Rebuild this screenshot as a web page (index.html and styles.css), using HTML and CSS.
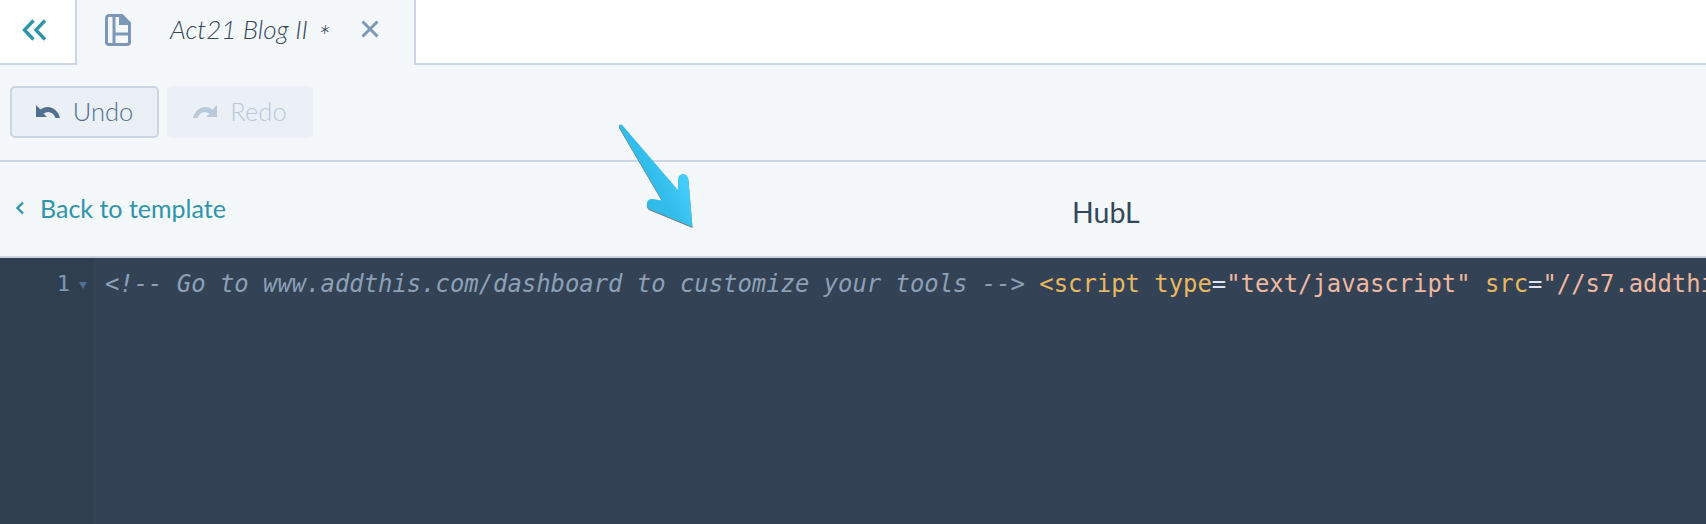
FILE: index.html
```html
<!DOCTYPE html>
<html lang="en">
<head>
<meta charset="utf-8">
<title>Act21 Blog II</title>
<link rel="stylesheet" href="styles.css">
</head>
<body>
<div class="tabbar">
  <div class="collapse">
    <svg class="icon-collapse" viewBox="0 0 26 22" width="26" height="22"><path d="M11.500 1.500 2.500 11l9 9.500M23 1.500 14 11l9 9.500" fill="none" stroke="#2e95ab" stroke-width="3.400"/></svg>
  </div>
  <div class="tab">
    <svg class="icon-file" viewBox="0 0 26 32" width="26" height="32">
      <path d="M4 1.500H17L24.500 9V28a2.500 2.500 0 0 1-2.500 2.500H4A2.500 2.500 0 0 1 1.500 28V4A2.500 2.500 0 0 1 4 1.500Z" fill="none" stroke="#7c98b6" stroke-width="3"/>
      <path d="M14 1h3.500L26 9.500V11H14Z" fill="#7c98b6"/>
      <path d="M9 2v28M9 20h16" fill="none" stroke="#7c98b6" stroke-width="3"/>
    </svg>
    <span class="tab-name">Act21 Blog II</span>
    <span class="tab-star">*</span>
    <svg class="icon-close" viewBox="0 0 18 18" width="18" height="18"><path d="M1.500 1.500l15 15M16.500 1.500l-15 15" fill="none" stroke="#7c98b6" stroke-width="3"/></svg>
  </div>
  <div class="tabfill"></div>
</div>
<div class="toolbar">
  <button class="btn btn-undo">
    <svg viewBox="0 0 24 14" width="24" height="14"><path d="M0 1v12h11L7.500 9.500c4.500-3 10-1.500 12 4.500H24C21.500 4 12 0 4.500 5.500Z" fill="#516f90"/></svg>
    <span>Undo</span>
  </button>
  <button class="btn btn-redo">
    <svg viewBox="0 0 24 14" width="24" height="14"><path d="M24 1v12H13l3.500-3.500c-4.500-3-10-1.500-12 4.500H0C2.500 4 12 0 19.500 5.500Z" fill="#b9c9da"/></svg>
    <span>Redo</span>
  </button>
</div>
<div class="header">
  <a class="back">
    <svg viewBox="0 0 10 14" width="10" height="14"><path d="M8 1.500 2.500 7 8 12.500" fill="none" stroke="#2e95ab" stroke-width="2.400"/></svg>
    <span>Back to template</span>
  </a>
  <div class="title">HubL</div>
</div>
<div class="editor">
  <div class="gutter"><span class="lineno">1</span><span class="fold"></span></div>
  <div class="code"><span class="c-comment">&lt;!-- Go to www.addthis.com/dashboard to customize your tools --&gt;</span> <span class="c-tag">&lt;script</span> <span class="c-tag">type</span><span class="c-eq">=</span><span class="c-str">"text/javascript"</span> <span class="c-tag">src</span><span class="c-eq">=</span><span class="c-str">"//s7.addthis.com/js/300/addthis_widget.js"</span></div>
</div>
<svg class="arrow" viewBox="0 0 100 130" width="100" height="130">
  <defs>
    <linearGradient id="arrowfill" x1="0.2" y1="0.75" x2="0.75" y2="0.35">
      <stop offset="0" stop-color="#2fb9e8"/>
      <stop offset="0.55" stop-color="#33bdeb"/>
      <stop offset="1" stop-color="#45cdfb"/>
    </linearGradient>
  </defs>
  <path d="M92.500 118 L50 100.500 C45 98 46 89 53 90 L62 91.500 L19 18 C18.500 15 21 15 23 17 L78 81 L78 71 C78 63 88 63 88.500 71 Z" fill="#777"/>
  <path d="M92.500 117 L50 99.500 C45 97 46 88 53 89 L62 90.500 L19 17 C18.500 14 21 14 23 16 L78 80 L78 70 C78 62 88 62 88.500 70 Z" fill="url(#arrowfill)"/>
</svg>
</body>
</html>
```
FILE: styles.css
```css
* { box-sizing: border-box; }
html, body { margin: 0; padding: 0; height: 100%; overflow: hidden; }
body {
  width: 1706px;
  height: 524px;
  position: relative;
  background: #f5f8fb;
  font-family: Lato, "Open Sans", sans-serif;
  color: #33475b;
  display: flex;
  flex-direction: column;
}
.tabbar { display: flex; height: 65px; flex: none; }
.collapse {
  width: 75px;
  background: #fff;
  border-bottom: 2px solid #cbd6e2;
  display: flex;
  align-items: center;
  justify-content: center;
  padding: 0 6px 3px 0;
}
.tab {
  width: 341px;
  display: flex;
  align-items: center;
  border-left: 2px solid #cbd6e2;
  border-right: 2px solid #cbd6e2;
  padding-left: 28px;
  padding-bottom: 8px;
}
.icon-file { flex: none; margin: 2px 39px 0 0; }
.tab-name { font-style: italic; font-size: 26px; font-weight: 300; }
.tab-star { font-style: italic; font-size: 30px; font-weight: 300; margin: 12px 31px 0 10px; }
.icon-close { flex: none; }
.tabfill { flex: 1; background: #fff; border-bottom: 2px solid #cbd6e2; }
.toolbar {
  height: 97px;
  flex: none;
  display: flex;
  gap: 8px;
  padding: 21px 0 0 10px;
  border-bottom: 2px solid #cdd5e4;
}
.btn {
  height: 52px;
  display: flex;
  align-items: center;
  justify-content: center;
  gap: 13px;
  border-radius: 5px;
  background: #eaf0f6;
  font-family: inherit;
  font-size: 25.500px;
  font-weight: 300;
  padding: 0 0 2px;
}
.btn-undo { width: 149px; border: 2px solid #cbd6e2; color: #516f90; }
.btn-redo { width: 146px; border: 0; color: #b9c9da; }
.header {
  height: 94px;
  flex: none;
  display: flex;
  align-items: center;
  padding: 2px 0 0 15px;
}
.back {
  display: flex;
  align-items: center;
  gap: 15px;
  color: #2e95ab;
  font-size: 25px;
  font-weight: 400;
  width: 1057px;
  padding-bottom: 4px;
}
.title { font-size: 28.500px; font-weight: 400; margin-top: 3px; }
.editor {
  flex: 1;
  display: flex;
  background: #334254;
  border-top: 2px solid #cbd3e0;
  overflow: hidden;
}
.gutter {
  width: 93px;
  flex: none;
  background: #2f3f50;
  display: flex;
  align-items: flex-start;
  justify-content: flex-end;
  padding: 11px 6px 0 0;
  font-family: "DejaVu Sans Mono", monospace;
  font-size: 22px;
  line-height: 30px;
  color: #7c98b6;
}
.lineno { margin-right: 9px; }
.fold {
  width: 0;
  height: 0;
  margin-top: 13px;
  border-left: 4px solid transparent;
  border-right: 4px solid transparent;
  border-top: 7px solid #516f90;
}
.code {
  flex: 1;
  padding: 11px 0 0 12px;
  font-family: "DejaVu Sans Mono", monospace;
  font-size: 23.880px;
  line-height: 30px;
  white-space: pre;
  color: #dfe3eb;
}
.c-comment { font-style: italic; color: #8ba0b6; }
.c-tag { color: #e8b860; }
.c-eq { color: #dfe3eb; }
.c-str { color: #eeb8a0; }
.arrow { position: absolute; left: 600px; top: 110px; }
```
